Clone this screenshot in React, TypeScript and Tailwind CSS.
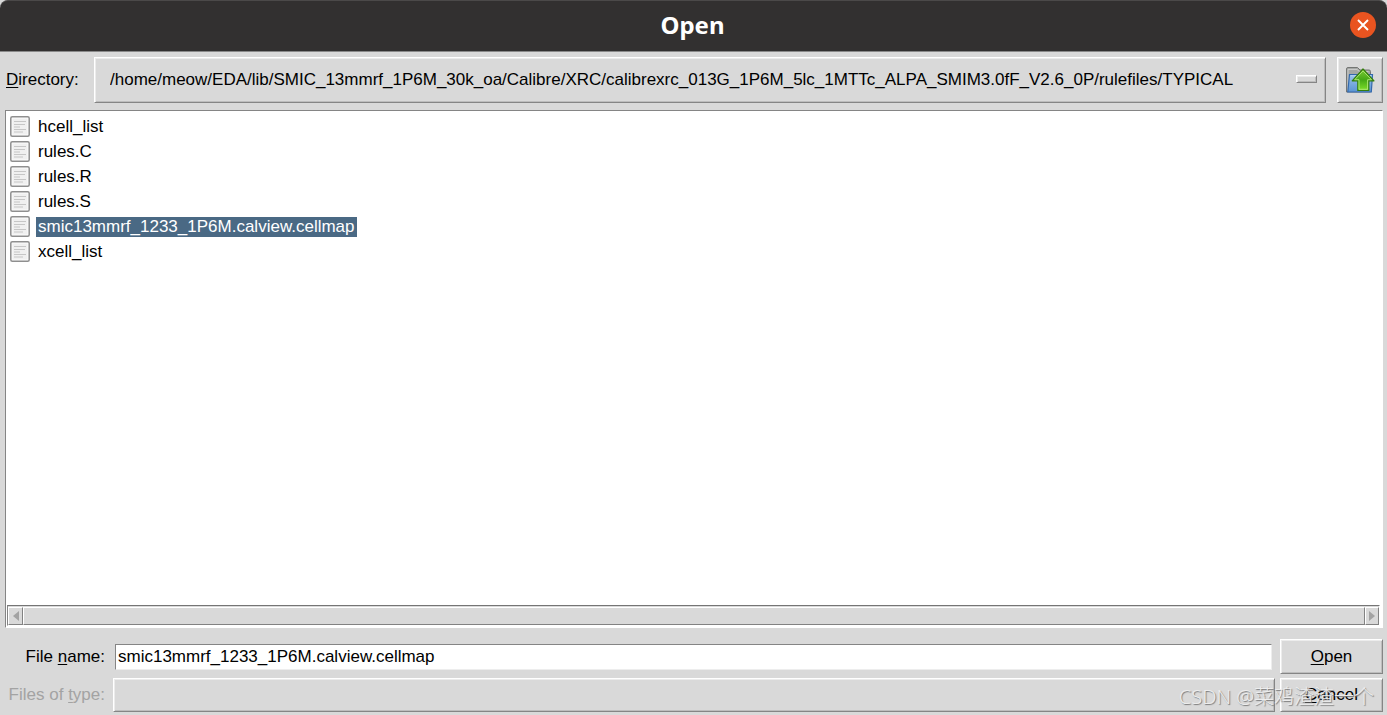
import { useState } from 'react';

const files = ['hcell_list', 'rules.C', 'rules.R', 'rules.S', 'smic13mmrf_1233_1P6M.calview.cellmap', 'xcell_list'];
const directory =
  '/home/meow/EDA/lib/SMIC_13mmrf_1P6M_30k_oa/Calibre/XRC/calibrexrc_013G_1P6M_5lc_1MTTc_ALPA_SMIM3.0fF_V2.6_0P/rulefiles/TYPICAL';

const raised =
  'border border-t-white border-l-white border-r-[#858585] border-b-[#858585] bg-[#d9d9d9] shadow-[inset_1px_1px_0_#ececec,inset_-1px_-1px_0_#bdbdbd]';

function FileIcon() {
  return (
    <svg width="20" height="21" viewBox="0 0 20 21" className="shrink-0" aria-hidden="true">
      <rect x="0.8" y="0.8" width="18.4" height="19.4" rx="1.5" fill="#fdfdfd" stroke="#8f8f8f" strokeWidth="1.5" />
      <rect x="2.5" y="2.5" width="15" height="16" fill="#f0f0f0" />
      <path d="M4 5.5h12M4 8.5h11M4 11h6M4 13.5h12M4 16h9" stroke="#c6c6c6" strokeWidth="1.1" />
    </svg>
  );
}

function FolderUpIcon() {
  return (
    <svg width="30" height="28" viewBox="0 0 30 28" className="shrink-0" aria-hidden="true">
      <defs>
        <linearGradient id="arrow" x1="0" y1="0" x2="0" y2="1">
          <stop offset="0" stopColor="#7ccb35" />
          <stop offset="0.5" stopColor="#45a815" />
          <stop offset="1" stopColor="#7fe02a" />
        </linearGradient>
        <linearGradient id="folder" x1="0" y1="0" x2="0" y2="1">
          <stop offset="0" stopColor="#9cc3ec" />
          <stop offset="1" stopColor="#5a94d2" />
        </linearGradient>
      </defs>
      <path d="M1.500 26V3Q1.500 1.500 3 1.500h9.500l2.500 2.500h9q1.500 0 1.500 1.500V26z" fill="#a5a7a5" stroke="#747674" />
      <path d="M3 25V3.500h9l2.500 2h9" stroke="#c9cac9" fill="none" />
      <path d="M4.500 8.500h23l-1.200 17.500H2.800z" fill="url(#folder)" stroke="#3469ac" strokeWidth="1.200" />
      <path d="M5.700 9.800h20.500" stroke="#b9d5f1" />
      <path d="M18 3 29 14.800h-5.200v9.700H12.800v-9.700H7.200z" fill="url(#arrow)" stroke="#347e0d" strokeWidth="1.200" strokeLinejoin="round" />
      <path d="M18 4.900 26.500 13.700H22.600v9.600h-8.600v-9.600h-4.300z" fill="none" stroke="#b3e97b" strokeWidth="0.900" />
    </svg>
  );
}

export default function App() {
  const [selected, setSelected] = useState(files[4]);
  return (
    <div className="relative flex h-screen flex-col overflow-hidden bg-[#d9d9d9] font-['Liberation_Sans',Arial,sans-serif] text-[17px] leading-5 text-black">
      <header className="flex h-[52px] shrink-0 items-center rounded-t-lg border-t border-b border-t-[#4b4949] border-b-[#8a8a8a] bg-[#323030] pr-[11px] pb-[2px] pl-[35px]">
        <h1 className="flex-1 text-center font-['Noto_Sans','Open_Sans',sans-serif] text-2xl font-bold text-white">Open</h1>
        <button type="button" aria-label="Close" className="flex size-[26px] items-center justify-center rounded-full bg-[#e95420]">
          <svg width="12" height="12" viewBox="0 0 12 12" aria-hidden="true">
            <path d="m1 1 10 10M11 1 1 11" stroke="white" strokeWidth="1.900" />
          </svg>
        </button>
      </header>

      <div className="flex shrink-0 items-stretch pt-[5px] pr-1 pl-[6px]">
        <label htmlFor="directory" className="w-[88px] shrink-0 self-center">
          <span className="underline underline-offset-2">D</span>irectory:
        </label>
        <div className={`relative flex h-[46px] min-w-0 flex-1 ${raised}`}>
          <select id="directory" className="h-full min-w-0 flex-1 appearance-none truncate bg-transparent pr-12 pl-[15px] outline-none">
            <option>{directory}</option>
          </select>
          <span className={`pointer-events-none absolute top-[17px] right-2 h-2 w-[21px] ${raised}`} />
        </div>
        <button type="button" aria-label="Parent directory" className={`ml-[11px] flex w-[46px] shrink-0 items-center justify-center ${raised}`}>
          <FolderUpIcon />
        </button>
      </div>

      <div className="mr-1 ml-[5px] mt-[7px] flex min-h-0 flex-1 flex-col border border-t-[#858585] border-r-white border-b-white border-l-[#858585] bg-white pb-px">
        <ul className="min-h-0 flex-1 overflow-hidden pt-[3px] pl-1">
          {files.map((file) => (
            <li key={file}>
              <button type="button" onClick={() => setSelected(file)} className="flex h-[25px] items-center gap-[6px]">
                <FileIcon />
                <span className={file === selected ? 'bg-[#4a6984] px-[2px] text-white' : 'px-[2px]'}>{file}</span>
              </button>
            </li>
          ))}
        </ul>
        <div className="mr-[2px] ml-px flex h-[21px] shrink-0 border border-t-[#757575] border-r-white border-b-white border-l-[#858585] bg-[#d9d9d9] pt-px">
          <button type="button" aria-label="Scroll left" className="flex w-[15px] items-center justify-center border border-t-white border-r-[#828282] border-b-[#828282] border-l-white">
            <svg width="8" height="10" viewBox="0 0 8 10" aria-hidden="true"><path d="M7 0v10L1 5z" fill="#a3a3a3" /></svg>
          </button>
          <div className="flex-1 border border-t-white border-r-[#828282] border-b-[#828282] border-l-white" />
          <button type="button" aria-label="Scroll right" className="flex w-[14px] items-center justify-center border border-t-white border-r-[#828282] border-b-[#828282] border-l-white">
            <svg width="8" height="10" viewBox="0 0 8 10" aria-hidden="true"><path d="M1 0v10l6-5z" fill="#a3a3a3" /></svg>
          </button>
        </div>
      </div>

      <div className="mt-[11px] mb-[3px] grid shrink-0 grid-cols-[101px_1fr_103px] gap-y-1 pr-1 pl-1">
        <label htmlFor="filename" className="self-center text-right">
          File <span className="underline underline-offset-2">n</span>ame:
        </label>
        <input
          id="filename"
          value={selected}
          onChange={(e) => setSelected(e.target.value)}
          className="mr-2 ml-[10px] h-[26px] min-w-0 self-center border border-t-[#858585] border-r-[#ededed] border-b-[#ededed] border-l-[#858585] bg-white px-[2px] outline-none"
        />
        <button type="button" className={`h-[35px] ${raised}`}>
          <span className="underline underline-offset-2">O</span>pen
        </button>
        <label htmlFor="filetype" className="self-center text-right text-[#a3a3a3]">
          Files of <span className="underline underline-offset-2">t</span>ype:
        </label>
        <select id="filetype" disabled className={`mr-[5px] ml-2 h-[34px] min-w-0 appearance-none ${raised}`} />
        <button type="button" className={`h-[34px] ${raised}`}>
          <span className="underline underline-offset-2">C</span>ancel
        </button>
      </div>

      <p className="pointer-events-none absolute right-[13px] bottom-1 font-['Noto_Sans','Noto_Sans_CJK_SC',sans-serif] text-xl leading-7 font-light text-[#ededed] [text-shadow:1px_1px_1px_#777]">
        CSDN @菜鸡渣渣一个
      </p>
    </div>
  );
}
